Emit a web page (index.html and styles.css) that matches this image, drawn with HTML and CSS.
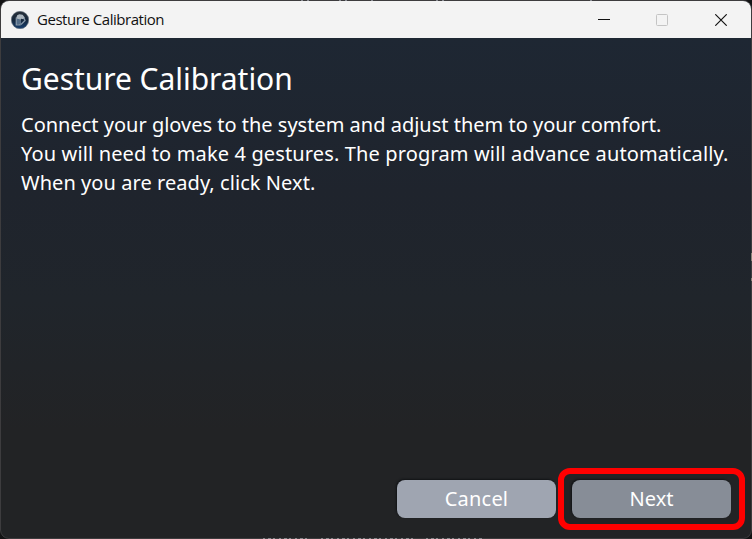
FILE: index.html
```html
<!DOCTYPE html>
<html lang="en">
<head>
<meta charset="utf-8">
<title>Gesture Calibration</title>
<link rel="stylesheet" href="styles.css">
</head>
<body>
<div class="window">
  <header class="titlebar">
    <svg class="app-icon" width="18" height="18" viewBox="0 0 18 18">
      <defs><linearGradient id="disc" x1="0" y1="0" x2="0" y2="1"><stop offset="0" stop-color="#29313b"/><stop offset=".5" stop-color="#15263b"/><stop offset="1" stop-color="#173f70"/></linearGradient></defs>
      <circle cx="9" cy="9" r="8.7" fill="url(#disc)" stroke="#68737f" stroke-width=".6"/>
      <path d="M5.2 7 6.2 4.3 8.3 3.2 11.6 3.8 13.8 6.5 12.5 8.2 10 7.8 9.5 9 7 8.2Z" fill="#aab4bd"/>
      <path d="M5.3 6.5v7.3H9V8.5M10 13.5l4-4-1-2.5" fill="none" stroke="#8496a8" stroke-width="1.3"/>
      <path d="M6 8h2.4v5H6z" fill="#526c88"/>
    </svg>
    <span class="title">Gesture Calibration</span>
    <div class="controls">
      <svg width="12" height="12" viewBox="0 0 12 12"><path d="M0 5.5h12" stroke="#111"/></svg>
      <svg width="12" height="12" viewBox="0 0 12 12"><rect x=".5" y=".5" width="11" height="11" rx="1" fill="none" stroke="#c4c4c4"/></svg>
      <svg width="12" height="12" viewBox="0 0 12 12"><path d="m.3.3 11.4 11.4M11.7.3.3 11.7" stroke="#111" stroke-width="1.15"/></svg>
    </div>
  </header>
  <main class="content">
    <h1>Gesture Calibration</h1>
    <p class="line-connect">Connect your gloves to the system and adjust them to your comfort.</p>
    <p class="line-gestures">You will need to make 4 gestures. The program will advance automatically.</p>
    <p class="line-ready">When you are ready, click Next.</p>
  </main>
  <footer class="actions">
    <button class="cancel">Cancel</button>
    <div class="highlight"><button class="next">Next</button></div>
  </footer>
</div>
<svg class="edges" width="752" height="539" viewBox="0 0 752 539" fill="none">
  <path d="M301 .5h125" stroke="#8a8d94" stroke-dasharray="2 4 2 30 2 4 2 24 2 54"/>
  <path d="M436 .5h9M590 .5h2" stroke="#8a8d94" stroke-dasharray="2 4"/>
  <path d="M263 538.5h46M321 538.5h92M426 538.5h57" stroke="#85868a" stroke-dasharray="2 3 3 2 2 4"/>
  <path d="M751.5 253v8M751.5 278v3" stroke="#898276"/>
</svg>
</body>
</html>
```

FILE: styles.css
```css
* { box-sizing: border-box; }
body { margin: 0; width: 752px; height: 539px; overflow: hidden; background: #131314; font-family: "Noto Sans", sans-serif; }
.window { width: 752px; height: 539px; display: flex; flex-direction: column; border: 1px solid #3d3c3e; border-radius: 9px; overflow: hidden; background: linear-gradient(#1e2733 37px, #1f242d 190px, #20252b 300px, #222325 430px, #222325); }
.titlebar { height: 37px; flex: none; display: flex; align-items: center; padding: 0 24px 0 10px; background: #f3f3f3; }
.app-icon { flex: none; }
.title { margin: -2px 0 0 8px; font-family: "Open Sans", sans-serif; font-size: 15px; line-height: 20px; letter-spacing: -.46px; color: #111; white-space: nowrap; }
.controls { margin-left: auto; display: flex; gap: 46px; }
.controls svg { display: block; }
.controls svg:last-child { margin-left: 1px; }
.content { flex: 1; padding: 20px 0 0 20px; color: #fff; white-space: nowrap; }
h1 { margin: 0 0 10px; font-size: 30px; line-height: 42px; font-weight: 400; letter-spacing: -.05px; }
p { margin: 0; font-size: 20px; line-height: 29px; }
.line-gestures { letter-spacing: .14px; }
.line-ready { letter-spacing: .06px; }
.actions { height: 71px; flex: none; display: flex; justify-content: flex-end; align-items: flex-start; padding: 0 6px 0 0; }
button { width: 159px; height: 38px; border: 0; border-radius: 8px; padding: 0; color: #fff; font: 20px/38px "Noto Sans", sans-serif; box-shadow: -1px -1px 2px #111316; }
.cancel { margin: 13px 2px 0 0; background: #9fa5b1; letter-spacing: .2px; }
.highlight { width: 187px; height: 62px; border: 6px solid #f00; border-radius: 12px; padding: 6px 8px; margin-top: 1px; }
.next { display: block; background: #878d97; }
.edges { position: absolute; left: 0; top: 0; pointer-events: none; }
```
